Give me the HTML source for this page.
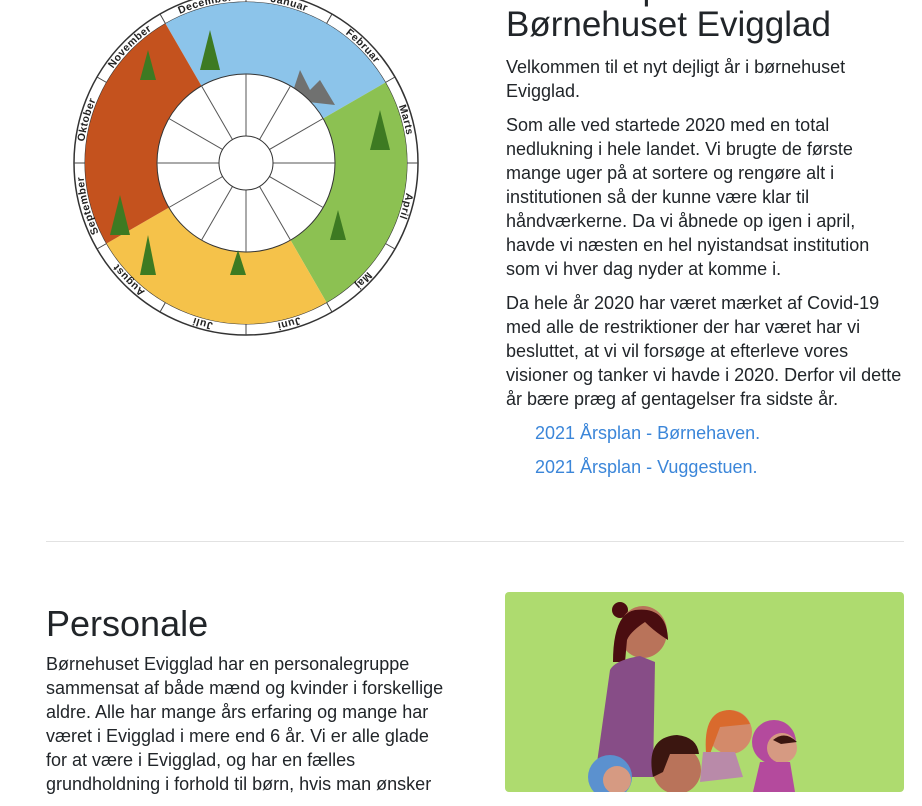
<!DOCTYPE html>
<html><head><meta charset="utf-8"><style>
body{margin:0;width:922px;height:780px;overflow:hidden;background:#fff;font-family:"Liberation Sans",sans-serif;color:#212529;position:relative}
.abs{position:absolute}
p{margin:0 0 10px;font-size:18px;line-height:24px}
h1{margin:0;font-weight:400}
a{color:#3b86d9;text-decoration:none}
</style></head><body>
<svg class="abs" style="left:46px;top:-10px" width="400" height="360" viewBox="46 -10 400 360">
<defs><path id="ring" d="M246 0 A163 163 0 0 1 246 326 A163 163 0 0 1 246 0"/></defs>
<circle cx="246" cy="163" r="172" fill="#fff" stroke="#333" stroke-width="1.5"/>
<circle cx="246" cy="163" r="161" fill="#fff" stroke="#333" stroke-width="1"/>
<g stroke="#444" stroke-width="1">
<line x1="246" y1="-9" x2="246" y2="2"/><line x1="246" y1="324" x2="246" y2="335"/>
<line x1="74" y1="163" x2="85" y2="163"/><line x1="407" y1="163" x2="418" y2="163"/>
<line x1="160" y1="14" x2="165.5" y2="23.6"/><line x1="332" y1="14" x2="326.5" y2="23.6"/>
<line x1="160" y1="312" x2="165.5" y2="302.4"/><line x1="332" y1="312" x2="326.5" y2="302.4"/>
<line x1="97" y1="77" x2="106.6" y2="82.5"/><line x1="395" y1="77" x2="385.4" y2="82.5"/>
<line x1="97" y1="249" x2="106.6" y2="243.5"/><line x1="395" y1="249" x2="385.4" y2="243.5"/>
</g>
<path d="M246 163 L165.5 23.6 A161 161 0 0 1 385.4 82.5Z" fill="#8cc4ea"/>
<path d="M246 163 L385.4 82.5 A161 161 0 0 1 326.5 302.4Z" fill="#8cc152"/>
<path d="M246 163 L326.5 302.4 A161 161 0 0 1 106.6 243.5Z" fill="#f5c24a"/>
<path d="M246 163 L106.6 243.5 A161 161 0 0 1 165.5 23.6Z" fill="#c4521e"/>
<path d="M290 100 l10 -30 l10 20 l10 -10 l15 25z" fill="#5e3a1e" opacity=".6"/>
<circle cx="246" cy="163" r="89" fill="#fff" stroke="#333"/>
<g stroke="#555" stroke-width="1">
<line x1="246" y1="74" x2="246" y2="252"/><line x1="157" y1="163" x2="335" y2="163"/>
<line x1="201.5" y1="85.9" x2="290.5" y2="240.1"/><line x1="290.5" y1="85.9" x2="201.5" y2="240.1"/>
<line x1="168.9" y1="118.5" x2="323.1" y2="207.5"/><line x1="168.9" y1="207.5" x2="323.1" y2="118.5"/>
</g>
<circle cx="246" cy="163" r="27" fill="#fff" stroke="#333"/>
<path d="M140 80 l8 -30 l8 30z M110 235 l10 -40 l10 40z M140 275 l8 -40 l8 40z M200 70 l10 -40 l10 40z M330 240 l8 -30 l8 30z M370 150 l10 -40 l10 40z M230 275 l8 -25 l8 25z" fill="#3d7a22"/>
<g font-family="Liberation Sans" font-weight="bold" font-size="10.5" fill="#222" text-anchor="middle" letter-spacing="0.5">
<text><textPath href="#ring" startOffset="983">December</textPath></text>
<text><textPath href="#ring" startOffset="43">Januar</textPath></text>
<text><textPath href="#ring" startOffset="128">Februar</textPath></text>
<text><textPath href="#ring" startOffset="213">Marts</textPath></text>
<text><textPath href="#ring" startOffset="299">April</textPath></text>
<text><textPath href="#ring" startOffset="384">Maj</textPath></text>
<text><textPath href="#ring" startOffset="469">Juni</textPath></text>
<text><textPath href="#ring" startOffset="555">Juli</textPath></text>
<text><textPath href="#ring" startOffset="640">August</textPath></text>
<text><textPath href="#ring" startOffset="725">September</textPath></text>
<text><textPath href="#ring" startOffset="811">Oktober</textPath></text>
<text><textPath href="#ring" startOffset="896">November</textPath></text>
</g></svg>
<div class="abs" style="left:590px;top:-32px;font-size:35px">Årsplan</div>
<h1 class="abs" style="left:506px;top:4px;font-size:35px;line-height:42px">Børnehuset Evigglad</h1>
<div class="abs" style="left:506px;top:55px;width:400px">
<p>Velkommen til et nyt dejligt år i børnehuset Evigglad.</p>
<p>Som alle ved startede 2020 med en total nedlukning i hele landet. Vi brugte de første mange uger på at sortere og rengøre alt i institutionen så der kunne være klar til håndværkerne. Da vi åbnede op igen i april, havde vi næsten en hel nyistandsat institution som vi hver dag nyder at komme i.</p>
<p>Da hele år 2020 har været mærket af Covid-19 med alle de restriktioner der har været har vi besluttet, at vi vil forsøge at efterleve vores visioner og tanker vi havde i 2020. Derfor vil dette år bære præg af gentagelser fra sidste år.</p>
<p style="padding-left:29px"><a>2021 Årsplan - Børnehaven.</a></p>
<p style="padding-left:29px"><a>2021 Årsplan - Vuggestuen.</a></p>
</div>
<div class="abs" style="left:46px;top:541px;width:858px;border-top:1px solid #e2e2e2"></div>
<h1 class="abs" style="left:46px;top:602px;font-size:36px;line-height:44px">Personale</h1>
<div class="abs" style="left:46px;top:652px;width:405px">
<p>Børnehuset Evigglad har en personalegruppe sammensat af både mænd og kvinder i forskellige aldre. Alle har mange års erfaring og mange har været i Evigglad i mere end 6 år. Vi er alle glade for at være i Evigglad, og har en fælles grundholdning i forhold til børn, hvis man ønsker</p>
</div>
<svg class="abs" style="left:505px;top:592px" width="399" height="200">
<rect width="399" height="200" rx="4" fill="#aedb6f"/>
<circle cx="115" cy="18" r="8" fill="#4a0d10"/>
<ellipse cx="138" cy="40" rx="24" ry="26" fill="#b9735a"/>
<path d="M108 70 Q108 22 130 18 Q162 14 163 48 Q150 40 140 30 Q125 40 122 48 L120 70 Z" fill="#4a0d10"/>
<path d="M105 78 Q110 68 135 64 L150 70 L148 185 L90 185 Z" fill="#874d87"/>
<circle cx="105" cy="185" r="22" fill="#5b91cf"/>
<circle cx="112" cy="188" r="14" fill="#d69a82"/>
<circle cx="172" cy="178" r="24" fill="#b9735a"/>
<path d="M148 185 Q140 145 172 143 Q192 145 194 162 L165 162 L158 180 Z" fill="#3b1610"/>
<circle cx="225" cy="140" r="22" fill="#d38a6a"/>
<path d="M202 170 Q195 118 225 118 Q240 120 245 132 L215 135 Z" fill="#d96a2d"/>
<path d="M198 160 L230 160 L238 185 L195 190Z" fill="#b98aa9"/>
<circle cx="269" cy="150" r="22" fill="#b44a9d"/>
<circle cx="277" cy="156" r="15" fill="#d69a82"/>
<path d="M268 148 Q280 138 292 150 L276 152Z" fill="#3b1610"/>
<path d="M255 170 L285 170 L290 200 L248 200Z" fill="#b44a9d"/>
</svg>
</body></html>
